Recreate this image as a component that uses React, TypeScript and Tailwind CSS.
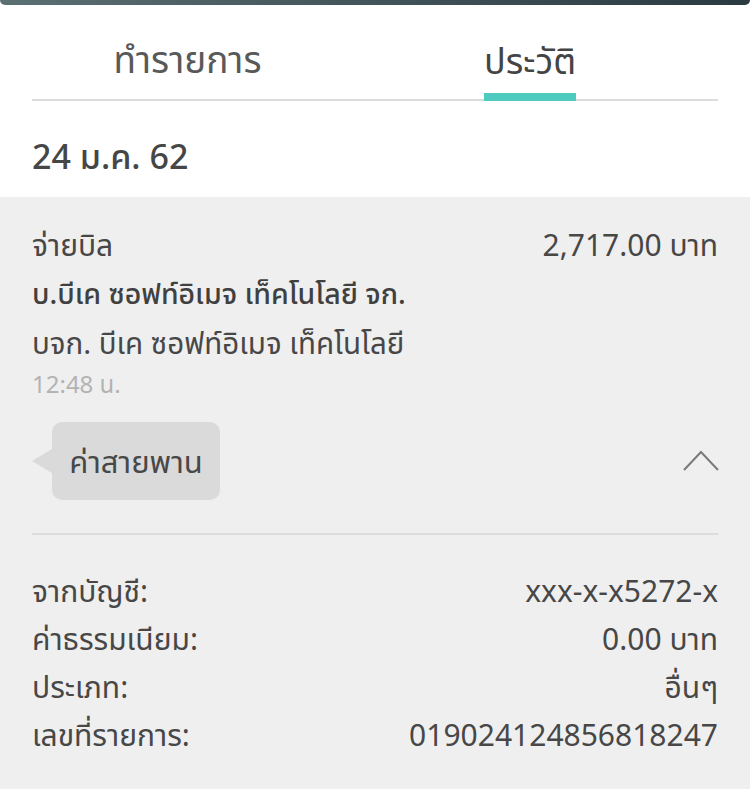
const font = { fontFamily: '"Noto Sans", "Noto Sans Thai", "DejaVu Sans", sans-serif' };

const details = [
  { label: "จากบัญชี:", value: "xxx-x-x5272-x" },
  { label: "ค่าธรรมเนียม:", value: "0.00 บาท" },
  { label: "ประเภท:", value: "อื่นๆ" },
  { label: "เลขที่รายการ:", value: "019024124856818247" },
];

export default function App() {
  return (
    <div className="w-[750px] h-[789px] overflow-hidden bg-white text-[#474747]" style={font}>
      <div className="h-[5px] rounded-b-[14px] bg-gradient-to-r from-[#5b7073] to-[#2a3a41]" />

      <div className="px-8">
        <div className="flex h-[96px] items-end border-b-2 border-[#dcdcdc]">
          <div className="flex w-[311px] justify-center pb-[22px]">
            <span className="text-[37px] leading-none text-[#595959]">ทำรายการ</span>
          </div>
          <div className="ml-[141px] flex flex-col items-stretch">
            <span className="text-[36px] leading-none text-[#444]">ประวัติ</span>
            <div className="mt-[14px] -mb-[2px] h-[8px] bg-[#4ecbbf]" />
          </div>
        </div>
        <div className="flex h-[96px] items-center pt-[15px] text-[34px] font-medium text-[#464646]">24 ม.ค. 62</div>
      </div>

      <div className="bg-[#efefef] px-8 pt-[23px] pb-10">
        <div className="flex items-center justify-between text-[30px] leading-[49px]">
          <span>จ่ายบิล</span>
          <span>2,717.00 บาท</span>
        </div>
        <div className="text-[28.5px] font-medium leading-[49px] text-[#404040]">บ.บีเค ซอฟท์อิเมจ เท็คโนโลยี จก.</div>
        <div className="text-[29.5px] leading-[49px]">บจก. บีเค ซอฟท์อิเมจ เท็คโนโลยี</div>
        <div className="text-[24px] leading-[34px] text-[#b3b3b3]">12:48 น.</div>

        <div className="mt-[21px] flex items-center justify-between">
          <div className="flex items-center">
            <div className="h-0 w-0 border-y-[12px] border-r-[20px] border-y-transparent border-r-[#dadada]" />
            <div className="flex h-[78px] w-[168px] items-center justify-center rounded-[10px] bg-[#dadada] text-[31px] text-[#484848]">
              ค่าสายพาน
            </div>
          </div>
          <svg width="36" height="22" viewBox="0 0 36 22" fill="none" className="mr-[-1px]">
            <polyline points="1,20 18,2 35,20" stroke="#7a7a7a" strokeWidth="2" />
          </svg>
        </div>

        <div className="mt-[33px] h-[2px] bg-[#dcdcdc]" />

        <div className="mt-[32px] flex flex-col">
          {details.map((row) => (
            <div key={row.label} className="flex items-center justify-between text-[30px] leading-[48px]">
              <span>{row.label}</span>
              <span>{row.value}</span>
            </div>
          ))}
        </div>
      </div>
    </div>
  );
}
